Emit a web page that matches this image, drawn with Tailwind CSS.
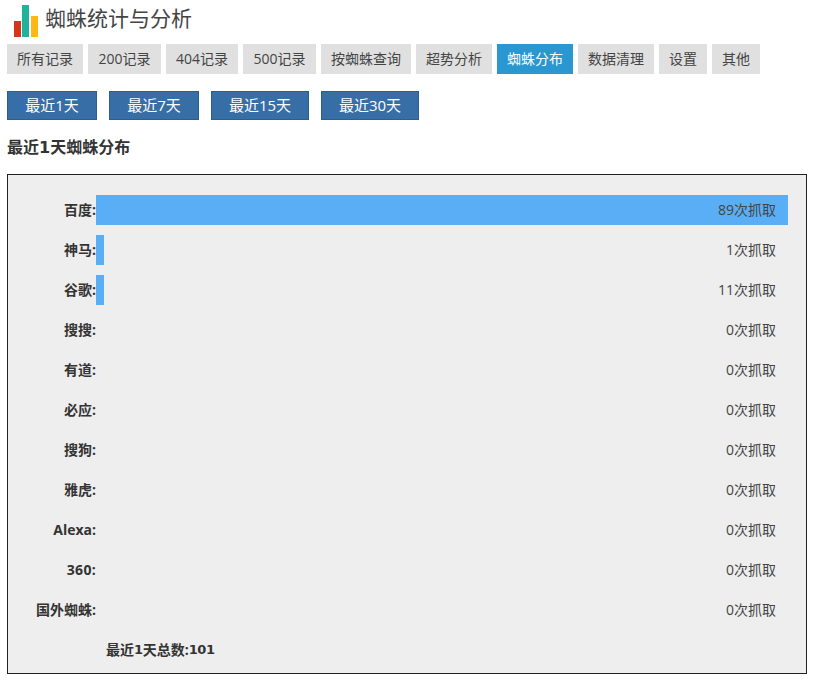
<!DOCTYPE html>
<html lang="zh">
<head>
<meta charset="utf-8">
<title>蜘蛛统计与分析</title>
<script src="https://cdn.jsdelivr.net/npm/@tailwindcss/browser@4"></script>
</head>
<body class="bg-white text-[#444] text-sm font-['Open_Sans','Noto_Sans_CJK_SC',sans-serif]">
  <div class="w-[818px] h-[686px] overflow-hidden px-[7px]">
    <!-- Header -->
    <header class="h-11 flex items-start pt-[5px]">
      <svg class="ml-[7px] w-6 h-8" viewBox="0 0 24 32">
        <rect x="0" y="16" width="7" height="16" fill="#d4351c"/>
        <rect x="8" y="0" width="7" height="32" fill="#1fb39b"/>
        <rect x="17" y="11" width="7" height="21" fill="#fcb814"/>
      </svg>
      <h1 class="ml-[7px] mt-[3px] text-[21px] leading-[21px] font-normal text-[#444]">蜘蛛统计与分析</h1>
    </header>

    <!-- Tabs -->
    <nav class="flex gap-[5px] h-[30px]">
      <a class="w-[76px] flex items-center justify-center bg-[#e0e0e0]">所有记录</a>
      <a class="w-[73px] flex items-center justify-center bg-[#e0e0e0]">200记录</a>
      <a class="w-[72px] flex items-center justify-center bg-[#e0e0e0]">404记录</a>
      <a class="w-[73px] flex items-center justify-center bg-[#e0e0e0]">500记录</a>
      <a class="w-[90px] flex items-center justify-center bg-[#e0e0e0]">按蜘蛛查询</a>
      <a class="w-[76px] flex items-center justify-center bg-[#e0e0e0]">超势分析</a>
      <a class="w-[76px] flex items-center justify-center bg-[#2b97d0] text-white">蜘蛛分布</a>
      <a class="w-[76px] flex items-center justify-center bg-[#e0e0e0]">数据清理</a>
      <a class="w-[48px] flex items-center justify-center bg-[#e0e0e0]">设置</a>
      <a class="w-[48px] flex items-center justify-center bg-[#e0e0e0]">其他</a>
    </nav>

    <!-- Range buttons -->
    <div class="flex gap-3 mt-[17px] h-[29px] text-[15px] text-white">
      <button class="w-[90px] bg-[#376ea6] border border-[#2b5f92]">最近1天</button>
      <button class="w-[90px] bg-[#376ea6] border border-[#2b5f92]">最近7天</button>
      <button class="w-[98px] bg-[#376ea6] border border-[#2b5f92]">最近15天</button>
      <button class="w-[98px] bg-[#376ea6] border border-[#2b5f92]">最近30天</button>
    </div>

    <h2 class="mt-[16px] h-[22px] leading-[22px] text-base font-bold text-[#333]">最近<span class="font-['DejaVu_Sans']">1</span>天蜘蛛分布</h2>

    <!-- Chart -->
    <section class="mt-[16px] w-[800px] h-[500px] border border-[#222] bg-[#eee] pt-5 flex flex-col gap-[10px]">
      <div class="flex h-[30px] items-center">
        <span class="w-[88px] text-right font-bold text-[#333]">百度:</span>
        <div class="w-[692px] h-full bg-[#5aaef6] flex items-center justify-end pr-3">89次抓取</div>
      </div>
      <div class="flex h-[30px] items-center">
        <span class="w-[88px] text-right font-bold text-[#333]">神马:</span>
        <div class="w-[692px] h-full flex items-center justify-end pr-3 relative"><i class="absolute left-0 top-0 h-full w-2 bg-[#5aaef6]"></i>1次抓取</div>
      </div>
      <div class="flex h-[30px] items-center">
        <span class="w-[88px] text-right font-bold text-[#333]">谷歌:</span>
        <div class="w-[692px] h-full flex items-center justify-end pr-3 relative"><i class="absolute left-0 top-0 h-full w-2 bg-[#5aaef6]"></i>11次抓取</div>
      </div>
      <div class="flex h-[30px] items-center">
        <span class="w-[88px] text-right font-bold text-[#333]">搜搜:</span>
        <div class="w-[692px] text-right pr-3">0次抓取</div>
      </div>
      <div class="flex h-[30px] items-center">
        <span class="w-[88px] text-right font-bold text-[#333]">有道:</span>
        <div class="w-[692px] text-right pr-3">0次抓取</div>
      </div>
      <div class="flex h-[30px] items-center">
        <span class="w-[88px] text-right font-bold text-[#333]">必应:</span>
        <div class="w-[692px] text-right pr-3">0次抓取</div>
      </div>
      <div class="flex h-[30px] items-center">
        <span class="w-[88px] text-right font-bold text-[#333]">搜狗:</span>
        <div class="w-[692px] text-right pr-3">0次抓取</div>
      </div>
      <div class="flex h-[30px] items-center">
        <span class="w-[88px] text-right font-bold text-[#333]">雅虎:</span>
        <div class="w-[692px] text-right pr-3">0次抓取</div>
      </div>
      <div class="flex h-[30px] items-center">
        <span class="w-[88px] text-right font-bold text-[#333]">Alexa:</span>
        <div class="w-[692px] text-right pr-3">0次抓取</div>
      </div>
      <div class="flex h-[30px] items-center">
        <span class="w-[88px] text-right font-bold text-[#333] tracking-[0.3px]">360:</span>
        <div class="w-[692px] text-right pr-3">0次抓取</div>
      </div>
      <div class="flex h-[30px] items-center">
        <span class="w-[88px] text-right font-bold text-[#333]">国外蜘蛛:</span>
        <div class="w-[692px] text-right pr-3">0次抓取</div>
      </div>
      <div class="h-[30px] flex items-center pl-[98px] font-bold text-[#333] whitespace-pre">最近<span class="font-['DejaVu_Sans'] text-[13px] tracking-[-0.4px]">1</span>天总数:<span class="font-['DejaVu_Sans'] text-[13px] tracking-[-0.4px]">101</span></div>
    </section>
  </div>
</body>
</html>
